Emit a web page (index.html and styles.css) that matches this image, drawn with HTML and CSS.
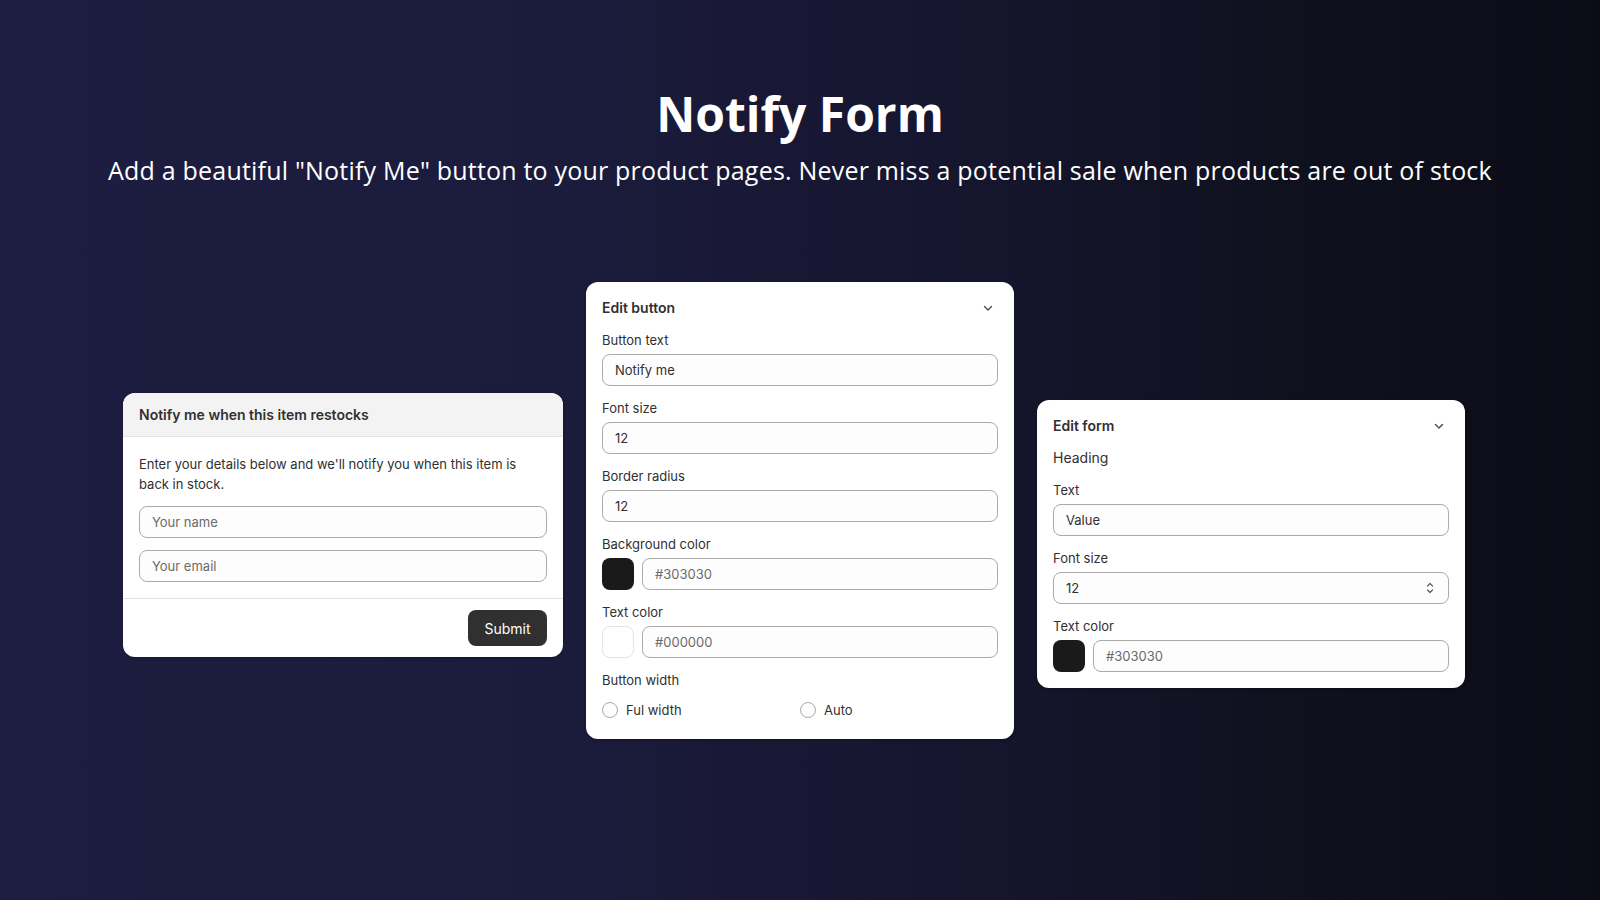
FILE: index.html
```html
<!DOCTYPE html>
<html lang="en">
<head>
    <meta charset="UTF-8">
    <meta name="viewport" content="width=device-width, initial-scale=1.0">
    <title>Notify Form</title>
    <link rel="stylesheet" href="styles.css">
</head>
<body>
    <header class="hero">
        <h1>Notify Form</h1>
        <p class="subtitle">Add a beautiful "Notify Me" button to your product pages. Never miss a potential sale when products are out of stock</p>
    </header>

    <main class="cards">
        <!-- storefront preview -->
        <div class="card preview-card">
            <div class="preview-head">Notify me when this item restocks</div>
            <div class="preview-body">
                <p>Enter your details below and we'll notify you when this item is back in stock.</p>
                <input type="text" class="field" placeholder="Your name">
                <input type="text" class="field" placeholder="Your email">
            </div>
            <div class="preview-foot">
                <button class="submit-button">Submit</button>
            </div>
        </div>

        <!-- button settings -->
        <div class="card settings-card button-card">
            <div class="settings-title">
                <span>Edit button</span>
                <svg class="chevron" width="12" height="12" viewBox="0 0 12 12"><path d="M2.5 4.5 6 8l3.5-3.5" fill="none" stroke="#4a4a4a" stroke-width="1.4" stroke-linecap="round" stroke-linejoin="round"/></svg>
            </div>
            <div class="group">
                <label>Button text</label>
                <input type="text" class="field" value="Notify me">
            </div>
            <div class="group">
                <label>Font size</label>
                <input type="text" class="field" value="12">
            </div>
            <div class="group">
                <label>Border radius</label>
                <input type="text" class="field" value="12">
            </div>
            <div class="group">
                <label>Background color</label>
                <div class="color-row">
                    <span class="swatch dark"></span>
                    <input type="text" class="field" placeholder="#303030">
                </div>
            </div>
            <div class="group">
                <label>Text color</label>
                <div class="color-row">
                    <span class="swatch light"></span>
                    <input type="text" class="field" placeholder="#000000">
                </div>
            </div>
            <div class="group">
                <label>Button width</label>
                <div class="radio-row">
                    <span class="radio-option"><span class="radio"></span>Ful width</span>
                    <span class="radio-option"><span class="radio"></span>Auto</span>
                </div>
            </div>
        </div>

        <!-- form settings -->
        <div class="card settings-card form-card">
            <div class="settings-title">
                <span>Edit form</span>
                <svg class="chevron" width="12" height="12" viewBox="0 0 12 12"><path d="M2.5 4.5 6 8l3.5-3.5" fill="none" stroke="#4a4a4a" stroke-width="1.4" stroke-linecap="round" stroke-linejoin="round"/></svg>
            </div>
            <div class="section-name">Heading</div>
            <div class="group">
                <label>Text</label>
                <input type="text" class="field" value="Value">
            </div>
            <div class="group">
                <label>Font size</label>
                <div class="select">
                    <span>12</span>
                    <svg width="12" height="16" viewBox="0 0 12 16"><path d="M3.5 6 6 3.5 8.5 6M3.5 10 6 12.5 8.5 10" fill="none" stroke="#5c5c5c" stroke-width="1.2" stroke-linecap="round" stroke-linejoin="round"/></svg>
                </div>
            </div>
            <div class="group">
                <label>Text color</label>
                <div class="color-row">
                    <span class="swatch dark"></span>
                    <input type="text" class="field" placeholder="#303030">
                </div>
            </div>
        </div>
    </main>
</body>
</html>
```

FILE: styles.css
```css
body {
    margin: 0;
    height: 900px;
    overflow: hidden;
    background: linear-gradient(90deg, #1d1d41 0%, #1b1b3c 35%, #161630 58%, #10111f 80%, #0b0c16 100%);
    font-family: Inter, "Liberation Sans", sans-serif;
    color: #303030;
}
.hero {
    padding-top: 81px;
    text-align: center;
    color: #ffffff;
}
.hero h1 {
    margin: 0;
    font-family: "Open Sans", sans-serif;
    font-weight: 700;
    font-size: 48px;
    line-height: 66px;
}
.subtitle {
    margin: 6px 0 0;
    font-family: "Open Sans", sans-serif;
    font-weight: 400;
    font-size: 25px;
    line-height: 34px;
    letter-spacing: 0.2px;
}
.cards {
    display: flex;
    align-items: flex-start;
    gap: 23px;
    padding-left: 123px;
    margin-top: 95px;
}
.card {
    background: #ffffff;
    border-radius: 12px;
    box-shadow: 0 1px 3px rgba(0, 0, 0, 0.25);
    box-sizing: border-box;
    font-size: 13px;
    line-height: 20px;
}
.preview-card {
    width: 440px;
    margin-top: 111px;
    overflow: hidden;
}
.preview-head {
    height: 44px;
    padding: 0 16px;
    box-sizing: border-box;
    display: flex;
    align-items: center;
    background: #f3f3f3;
    border-bottom: 1px solid #e3e3e3;
    font-weight: 600;
    font-size: 14px;
}
.preview-body {
    padding: 17px 16px 16px;
    display: flex;
    flex-direction: column;
    gap: 12px;
}
.preview-body p {
    margin: 0;
}
.preview-foot {
    border-top: 1px solid #e3e3e3;
    padding: 11px 16px 11px;
    display: flex;
    justify-content: flex-end;
}
.submit-button {
    height: 36px;
    width: 79px;
    border: none;
    border-radius: 8px;
    background: #303030;
    color: #ffffff;
    font-family: Inter, sans-serif;
    font-size: 14px;
}
.field {
    height: 32px;
    box-sizing: border-box;
    width: 100%;
    padding: 0 12px;
    border: 1px solid #ababab;
    border-radius: 8px;
    background: #fdfdfd;
    font-family: Inter, sans-serif;
    font-size: 13px;
    color: #303030;
    outline: none;
}
.field::placeholder {
    color: #6b6b6b;
}
.settings-card {
    width: 428px;
    padding: 16px 16px 16px;
    display: flex;
    flex-direction: column;
    gap: 12px;
}
.button-card {
    padding-bottom: 17px;
}
.form-card {
    margin-top: 118px;
}
.settings-title {
    display: flex;
    justify-content: space-between;
    align-items: center;
    font-weight: 600;
    font-size: 14px;
}
.chevron {
    margin-right: 4px;
}
.section-name {
    font-size: 14px;
}
.group {
    display: flex;
    flex-direction: column;
    gap: 4px;
}
.group label {
    display: block;
}
.color-row {
    display: flex;
    gap: 8px;
}
.swatch {
    flex: none;
    width: 32px;
    height: 32px;
    box-sizing: border-box;
    border-radius: 8px;
}
.swatch.dark {
    background: #1a1a1a;
}
.swatch.light {
    background: #ffffff;
    border: 1px solid #e3e3e3;
}
.radio-row {
    display: grid;
    grid-template-columns: 1fr 1fr;
    height: 24px;
    align-items: center;
    margin-top: 4px;
}
.radio-option {
    display: flex;
    align-items: center;
    gap: 8px;
}
.radio {
    width: 16px;
    height: 16px;
    box-sizing: border-box;
    border: 1px solid #a8a8a8;
    border-radius: 50%;
    background: #fdfdfd;
}
.select {
    height: 32px;
    box-sizing: border-box;
    padding: 0 12px;
    border: 1px solid #ababab;
    border-radius: 8px;
    background: #fdfdfd;
    display: flex;
    justify-content: space-between;
    align-items: center;
}
```
